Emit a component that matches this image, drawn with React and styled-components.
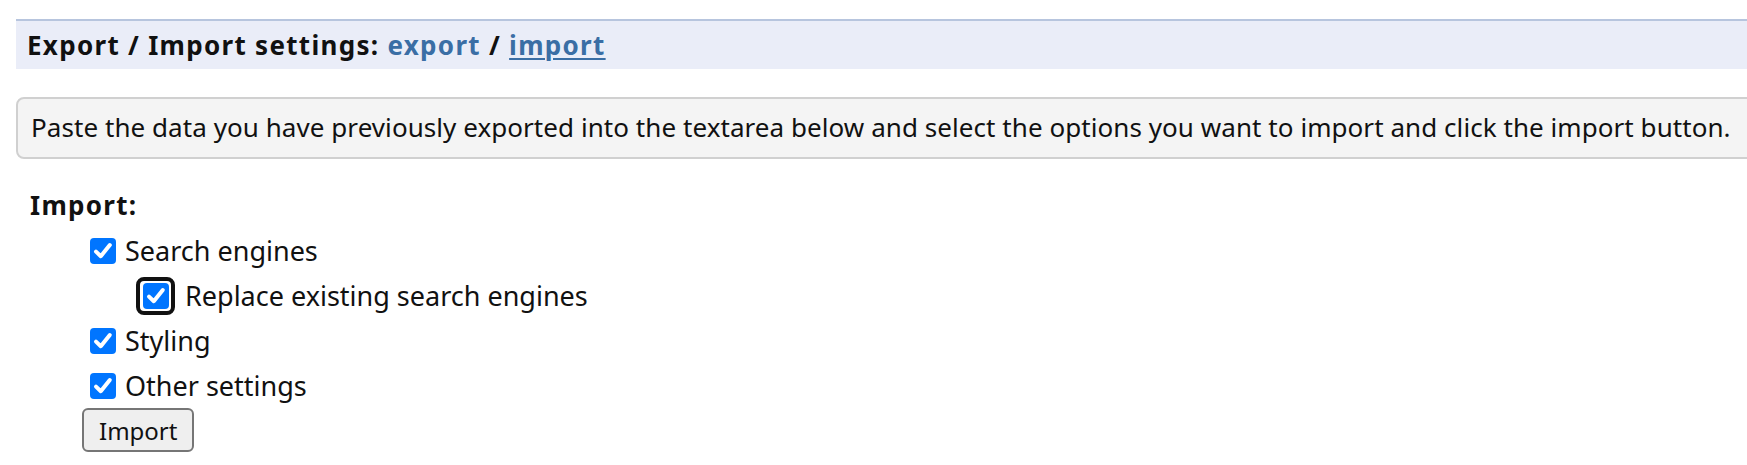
import React, { useState } from "react";
import styled, { createGlobalStyle } from "styled-components";

const GlobalStyle = createGlobalStyle`
  body {
    margin: 0;
    background: #ffffff;
    font-family: "Noto Sans", "DejaVu Sans", sans-serif;
    color: #111111;
  }
`;

const options = [
  { key: "engines", label: "Search engines", level: 0 },
  { key: "replace", label: "Replace existing search engines", level: 1, focused: true },
  { key: "styling", label: "Styling", level: 0 },
  { key: "other", label: "Other settings", level: 0 },
];

export default function App() {
  const [checked, setChecked] = useState({
    engines: true,
    replace: true,
    styling: true,
    other: true,
  });

  const toggle = (key) => setChecked({ ...checked, [key]: !checked[key] });

  return (
    <Page>
      <GlobalStyle />
      <TitleBar>
        Export / Import settings: <NavLink>export</NavLink> /{" "}
        <NavLink $active>import</NavLink>
      </TitleBar>

      <InfoBox>
        Paste the data you have previously exported into the textarea below
        and select the options you want to import and click the import button.
      </InfoBox>

      <ImportSection>
        <SectionTitle>Import:</SectionTitle>
        <OptionList>
          {options.map((opt) => (
            <OptionRow key={opt.key} $level={opt.level} onClick={() => toggle(opt.key)}>
              <BoxWrap $focused={opt.focused}>
                <Box $checked={checked[opt.key]}>
                  {checked[opt.key] && (
                    <svg width="24" height="24" viewBox="0 0 24 24">
                      <path
                        d="M5 12.6 L9.8 17.2 L18.8 6"
                        fill="none"
                        stroke="#ffffff"
                        strokeWidth="4"
                        strokeLinecap="round"
                        strokeLinejoin="round"
                      />
                    </svg>
                  )}
                </Box>
              </BoxWrap>
              <OptionLabel>{opt.label}</OptionLabel>
            </OptionRow>
          ))}
        </OptionList>
        <ImportButton>Import</ImportButton>
      </ImportSection>
    </Page>
  );
}

const Page = styled.div`
  padding: 19px 0 0 16px;
  overflow: hidden;
  width: 1747px;
  height: 465px;
  box-sizing: border-box;
`;

const TitleBar = styled.div`
  margin-right: -20px;
  border-top: 2px solid #b7c5de;
  background: #eaedf8;
  height: 48px;
  line-height: 48px;
  padding-left: 11px;
  font-size: 26px;
  font-weight: bold;
  letter-spacing: 1.3px;
  color: #111111;
`;

const NavLink = styled.a`
  color: #3a6ea5;
  text-decoration: ${(p) => (p.$active ? "underline" : "none")};
  text-decoration-thickness: 2px;
  text-underline-offset: 3px;
  cursor: pointer;
`;

const InfoBox = styled.div`
  margin-top: 28px;
  margin-right: -20px;
  border: 2px solid #d0d0d0;
  border-radius: 8px;
  background: #f4f4f4;
  height: 58px;
  line-height: 56px;
  padding: 0 13px;
  font-size: 26px;
  letter-spacing: 0.06px;
  color: #111111;
`;

const ImportSection = styled.div`
  margin-top: 24px;
  padding-left: 14px;
`;

const SectionTitle = styled.div`
  font-size: 26px;
  font-weight: bold;
  letter-spacing: 1.3px;
  line-height: 45px;
`;

const OptionList = styled.div`
  display: flex;
  flex-direction: column;
  padding-left: 52px;
`;

const OptionRow = styled.label`
  display: flex;
  align-items: center;
  height: 45px;
  padding-left: ${(p) => p.$level * 54}px;
  cursor: pointer;
`;

const BoxWrap = styled.span`
  display: flex;
  align-items: center;
  justify-content: center;
  margin-left: ${(p) => (p.$focused ? "0" : "8px")};
  margin-right: ${(p) => (p.$focused ? "10px" : "9px")};
  width: ${(p) => (p.$focused ? "39px" : "26px")};
  height: ${(p) => (p.$focused ? "38px" : "26px")};
  box-sizing: border-box;
  border: ${(p) => (p.$focused ? "4px solid #111111" : "none")};
  border-radius: 8px;
`;

const Box = styled.span`
  display: flex;
  align-items: center;
  justify-content: center;
  width: 26px;
  height: 26px;
  border-radius: 4px;
  background: ${(p) => (p.$checked ? "#0075ff" : "#ffffff")};
  border: ${(p) => (p.$checked ? "none" : "2px solid #767676")};
  box-sizing: border-box;
`;

const OptionLabel = styled.span`
  font-size: 27px;
  color: #111111;
`;

const ImportButton = styled.button`
  margin-left: 52px;
  height: 44px;
  padding: 0 15px;
  font-family: "Noto Sans", "DejaVu Sans", sans-serif;
  font-size: 24px;
  color: #111111;
  background: #efefef;
  border: 2px solid #767676;
  border-radius: 6px;
  cursor: pointer;
`;
